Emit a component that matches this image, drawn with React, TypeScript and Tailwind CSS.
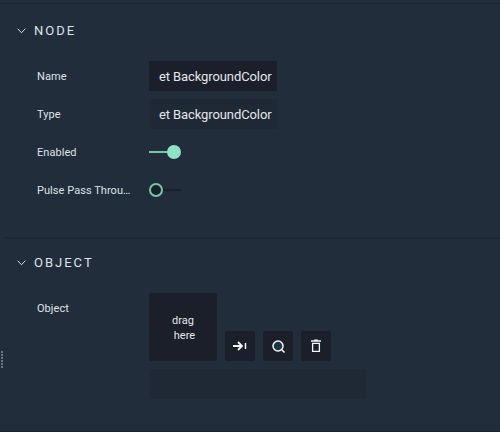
import type { ReactNode } from "react";

function Header({ title }: { title: string }) {
  return (
    <div className="flex h-[18px] items-center pl-[17px]">
      <svg width="9" height="6" viewBox="0 0 9 6" fill="none" stroke="#d6dade" strokeWidth="1">
        <path d="M0.7 0.7 L4.5 4.8 L8.3 0.7" />
      </svg>
      <h2 className="ml-2 text-[13px] leading-[18px] tracking-[2px] text-[#dfe2e6]">{title}</h2>
    </div>
  );
}

function Row({ label, children }: { label: string; children: ReactNode }) {
  return (
    <div className="flex h-[30px] items-center pl-[37px]">
      <span className="w-[96px] truncate pt-[2px] text-[11px] leading-4 tracking-[0.05px] text-[#dfe2e6]">{label}</span>
      <div className="ml-4 flex">{children}</div>
    </div>
  );
}

function Toggle({ on = false }: { on?: boolean }) {
  return (
    <svg width="34" height="16" viewBox="0 0 34 16" fill="none">
      {on ? (
        <>
          <path d="M0 8H20" stroke="#73c8a9" strokeWidth="2" />
          <circle cx="25" cy="8" r="7" fill="#8fe3c1" />
        </>
      ) : (
        <>
          <path d="M14 8H32" stroke="#1a1f29" strokeWidth="2" />
          <circle cx="7" cy="8" r="6" fill="#1a1f29" stroke="#73c8a9" strokeWidth="2" />
        </>
      )}
    </svg>
  );
}

function IconButton({ label, children }: { label: string; children: ReactNode }) {
  return (
    <button aria-label={label} className="size-[30px] rounded-[2px] bg-[#1a1f29]">
      <svg width="30" height="30" viewBox="0 0 30 30" fill="none" stroke="#f4f5f6">
        {children}
      </svg>
    </button>
  );
}

export default function App() {
  return (
    <main className="flex h-[432px] w-[500px] overflow-hidden border-b border-[#1c2431] bg-[#222d3c] font-[Roboto,sans-serif]">
      <div className="flex w-[5px] shrink-0 flex-col gap-px pl-px pt-[351px]">
        {[0, 1, 2, 3, 4, 5].map((dot) => (
          <i key={dot} className="size-[2px] bg-[#6d7580]" />
        ))}
      </div>
      <div className="-ml-[5px] w-[500px] shrink-0">
        <section className="mt-[3px] h-[234px] border-t border-[#1c2633] pt-[18px]">
          <Header title="NODE" />
          <div className="mt-[21px] flex flex-col gap-2">
            <Row label="Name">
              <div className="flex h-[30px] w-[128px] items-center bg-[#1a1f29] pl-[10px] pt-[2px] text-[13px] tracking-[-0.1px] text-[#e4e6e9]">et BackgroundColor</div>
            </Row>
            <Row label="Type">
              <div className="flex h-[30px] w-[128px] items-center bg-[#1f2835] pl-[10px] pt-[2px] text-[13px] tracking-[-0.1px] text-[#e4e6e9]">et BackgroundColor</div>
            </Row>
            <Row label="Enabled">
              <Toggle on />
            </Row>
            <Row label="Pulse Pass Through">
              <Toggle />
            </Row>
          </div>
        </section>
        <section>
          <div className="ml-[5px] h-[2px] bg-[#1e2735]" />
          <div className="pt-[15px]">
            <Header title="OBJECT" />
          </div>
          <div className="mt-[21px] flex pl-[37px]">
            <span className="mt-[8px] w-[112px] text-[11px] leading-4 tracking-[0.05px] text-[#dfe2e6]">Object</span>
            <div>
              <div className="flex items-end gap-2">
                <div className="flex size-[68px] flex-col items-center justify-center rounded-[2px] bg-[#1a1f29] pt-[2px] text-[11px] leading-[15px] text-[#e4e6e9]">
                  <span>drag</span>
                  <span className="ml-[3px]">here</span>
                </div>
                <IconButton label="Select object">
                  <path d="M8 15H17M13 11L17 15L13 19" strokeWidth="1.8" />
                  <path d="M20.5 12V18" strokeWidth="1.5" />
                </IconButton>
                <IconButton label="Find object">
                  <circle cx="15" cy="15" r="5" fill="#1d3547" strokeWidth="1.5" />
                  <path d="M18.3 18.3L21.5 21.5" strokeWidth="1.6" />
                </IconButton>
                <IconButton label="Clear object">
                  <path d="M10 10H20M13.2 9.3H16.8" strokeWidth="1.4" />
                  <path d="M11.6 12.4H18.4V20.4H11.6Z" strokeWidth="1.3" />
                </IconButton>
              </div>
              <div className="mt-2 h-[30px] w-[217px] rounded-[2px] bg-[#1f2835]" />
            </div>
          </div>
        </section>
      </div>
    </main>
  );
}
